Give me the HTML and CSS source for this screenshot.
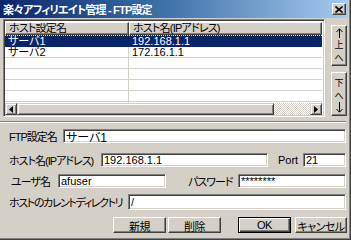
FILE: index.html
```html
<!DOCTYPE html>
<html lang="ja">
<head>
    <meta charset="UTF-8">
    <title>楽々アフィリエイト管理 - FTP設定</title>
    <link rel="stylesheet" href="styles.css">
</head>
<body>
    <div class="window">
        <div class="titlebar">
            <span class="title">楽々アフィリエイト管理 - FTP設定</span>
            <button class="close" type="button">
                <svg width="8" height="7" viewBox="0 0 8 7"><path d="M0.5 0.5 L7.5 6.5 M7.5 0.5 L0.5 6.5" stroke="#000" stroke-width="1.6"/></svg>
            </button>
        </div>

        <div class="top">
            <div class="list">
                <div class="list-head">
                    <div class="col col-name">ホスト設定名</div>
                    <div class="col col-host">ホスト名(IPアドレス)</div>
                </div>
                <div class="list-body">
                    <div class="row selected"><div class="cell cell-name">サーバ1</div><div class="cell">192.168.1.1</div></div>
                    <div class="row"><div class="cell cell-name">サーバ2</div><div class="cell">172.16.1.1</div></div>
                    <div class="row"><div class="cell cell-name"></div><div class="cell"></div></div>
                    <div class="row"><div class="cell cell-name"></div><div class="cell"></div></div>
                    <div class="row"><div class="cell cell-name"></div><div class="cell"></div></div>
                    <div class="row"><div class="cell cell-name"></div><div class="cell"></div></div>
                    <div class="row"><div class="cell cell-name"></div><div class="cell"></div></div>
                </div>
                <div class="hscroll">
                    <div class="sb-btn"><svg width="4" height="7" viewBox="0 0 4 7"><path d="M4 0 L0 3.5 L4 7 Z" fill="#000"/></svg></div>
                    <div class="sb-thumb"></div>
                    <div class="sb-track"></div>
                    <div class="sb-btn"><svg width="4" height="7" viewBox="0 0 4 7"><path d="M0 0 L4 3.5 L0 7 Z" fill="#000"/></svg></div>
                </div>
            </div>

            <div class="side">
                <button class="side-btn up" type="button">
                    <svg width="7" height="10" viewBox="0 0 7 10"><path d="M3.5 1 V10 M0.5 4 L3.5 0.8 L6.5 4" stroke="#000" fill="none"/></svg>
                    <span class="side-char">上</span>
                    <span class="side-char">へ</span>
                </button>
                <button class="side-btn down" type="button">
                    <span class="side-char">下</span>
                    <span class="side-char">へ</span>
                    <svg width="7" height="11" viewBox="0 0 7 11"><path d="M3.5 0 V10 M0.5 7 L3.5 10.2 L6.5 7" stroke="#000" fill="none"/></svg>
                </button>
            </div>
        </div>

        <div class="separator"></div>

        <div class="form">
            <div class="field-row row-1">
                <label class="lbl lbl-name">FTP設定名</label>
                <input class="box box-name" type="text" value="サーバ1">
            </div>
            <div class="field-row row-2">
                <label class="lbl lbl-host">ホスト名(IPアドレス)</label>
                <input class="box box-host" type="text" value="192.168.1.1">
                <label class="lbl lbl-port">Port</label>
                <input class="box box-port" type="text" value="21">
            </div>
            <div class="field-row row-3">
                <label class="lbl lbl-user">ユーザ名</label>
                <input class="box box-user" type="text" value="afuser">
                <label class="lbl lbl-pass">パスワード</label>
                <input class="box box-pass" type="text" value="********">
            </div>
            <div class="field-row row-4">
                <label class="lbl lbl-dir">ホストのカレントディレクトリ</label>
                <input class="box box-dir" type="text" value="/">
            </div>
            <div class="buttons">
                <button class="btn btn-new" type="button">新規</button>
                <button class="btn btn-del" type="button">削除</button>
                <button class="btn btn-ok" type="button">OK</button>
                <button class="btn btn-cancel" type="button">キャンセル</button>
            </div>
        </div>
    </div>
</body>
</html>
```

FILE: styles.css
```css
* {
    margin: 0;
    padding: 0;
    box-sizing: border-box;
}

body {
    width: 351px;
    height: 240px;
    overflow: hidden;
    background-color: #d4d0c8;
    font-family: "Liberation Sans", "Noto Sans CJK JP", sans-serif;
    font-size: 11px;
    font-feature-settings: "palt";
    color: #000;
}

.window {
    width: 351px;
    height: 240px;
    background-color: #d4d0c8;
    border-right: 1px solid #404040;
    border-bottom: 1px solid #404040;
    box-shadow: inset -1px -1px #808080;
}

/* title bar */
.titlebar {
    width: 348px;
    height: 18px;
    display: flex;
    align-items: center;
    justify-content: space-between;
    padding: 0 2px 0 3px;
    background: linear-gradient(to right, #0a246a, #3a6ea5 45%, #a6caf0);
}

.title {
    color: #fff;
    font-weight: bold;
    font-size: 11px;
    letter-spacing: -0.8px;
}

.close {
    width: 14px;
    height: 12px;
    display: flex;
    align-items: center;
    justify-content: center;
    background-color: #d4d0c8;
    border: 1px solid;
    border-color: #fff #404040 #404040 #fff;
    box-shadow: inset -1px -1px #808080;
}

/* list */
.top {
    display: flex;
    padding: 1px 0 0 3px;
}

.list {
    width: 322px;
    height: 98px;
    background-color: #fff;
    border: 1px solid;
    border-color: #808080 #fff #fff #808080;
    box-shadow: inset 1px 1px #404040, inset -1px -1px #d4d0c8;
    padding: 2px 2px 1px 1px;
    display: flex;
    flex-direction: column;
    overflow: hidden;
}

.list-head {
    display: flex;
    height: 13px;
    flex-shrink: 0;
}

.col {
    height: 13px;
    line-height: 11px;
    padding-left: 3px;
    background-color: #d4d0c8;
    border: 1px solid;
    border-color: #fff #404040 #404040 #fff;
    box-shadow: inset -1px -1px #808080;
    white-space: nowrap;
    overflow: hidden;
    letter-spacing: -0.8px;
}

.col-name {
    width: 124px;
}

.col-host {
    flex: 1;
}

.list-body {
    flex: 1;
    overflow: hidden;
}

.row {
    display: flex;
    height: 11px;
    border-bottom: 1px solid #d4d0c8;
}

.cell {
    line-height: 10px;
    padding-left: 3px;
    white-space: nowrap;
}

.cell-name {
    width: 124px;
    border-right: 1px solid #d4d0c8;
}

.row.selected {
    height: 12px;
    background-color: #0a246a;
    color: #fff;
    border-top: 1px dotted #e8e070;
    border-bottom: none;
}

.row.selected .cell-name {
    border-right-color: #0a246a;
}

.hscroll {
    display: flex;
    height: 12px;
    flex-shrink: 0;
}

.sb-btn {
    width: 12px;
    height: 12px;
    display: flex;
    align-items: center;
    justify-content: center;
    background-color: #d4d0c8;
    border: 1px solid;
    border-color: #d4d0c8 #404040 #404040 #d4d0c8;
    box-shadow: inset 1px 1px #fff, inset -1px -1px #808080;
}

.sb-thumb {
    width: 257px;
    background-color: #d4d0c8;
    border: 1px solid;
    border-color: #d4d0c8 #404040 #404040 #d4d0c8;
    box-shadow: inset 1px 1px #fff, inset -1px -1px #808080;
}

.sb-track {
    flex: 1;
    background-color: #fff;
    background-image: repeating-conic-gradient(#d4d0c8 0 25%, #fff 0 50%);
    background-size: 2px 2px;
}

/* up / down buttons */
.side {
    display: flex;
    flex-direction: column;
    gap: 6px;
    margin: 6px 0 0 6px;
}

.side-btn {
    width: 16px;
    display: flex;
    flex-direction: column;
    align-items: center;
    justify-content: center;
    background-color: #d4d0c8;
    font-family: "Noto Sans CJK JP", sans-serif;
    font-size: 9px;
    border: 1px solid;
    border-color: #fff #404040 #404040 #fff;
    box-shadow: inset -1px -1px #808080;
}

.side-char {
    display: block;
    line-height: 13px;
}

.side-btn.up {
    height: 41px;
}

.side-btn.down {
    height: 44px;
}

.separator {
    margin: 4px 4px 0 0;
    height: 2px;
    border-top: 1px solid #808080;
    border-bottom: 1px solid #fff;
}

/* form */
.form {
    padding-top: 6px;
}

.field-row {
    display: flex;
    align-items: center;
    height: 14px;
}

.row-2 {
    margin-top: 10px;
}

.row-3 {
    margin-top: 7px;
}

.row-4 {
    margin-top: 6px;
    height: 16px;
}

.lbl {
    padding-left: 9px;
    white-space: nowrap;
    letter-spacing: -1px;
}

.lbl-name { width: 63px; }
.lbl-host { width: 101px; }
.lbl-user { width: 58px; padding-left: 11px; }
.lbl-dir { width: 128px; letter-spacing: -1.4px; }

.lbl-port {
    width: 35px;
    padding-left: 10px;
    letter-spacing: 0;
}

.lbl-pass {
    width: 72px;
    padding-left: 22px;
}

.box {
    height: 100%;
    padding: 0 2px;
    font-family: "Liberation Sans", "Noto Sans CJK JP", sans-serif;
    font-size: 11px;
    font-feature-settings: "palt";
    color: #000;
    background-color: #fff;
    border: 1px solid;
    border-color: #808080 #fff #fff #808080;
    box-shadow: inset 1px 1px #404040, inset -1px -1px #d4d0c8;
    outline: none;
}

.box-name { width: 283px; font-size: 12px; }
.box-host { width: 167px; }
.box-port { width: 43px; }
.box-user { width: 108px; }
.box-pass { width: 108px; }
.box-dir { width: 218px; }

.buttons {
    display: flex;
    margin: 7px 0 0 113px;
    height: 16px;
}

.btn {
    width: 53px;
    height: 16px;
    font-family: "Liberation Sans", "Noto Sans CJK JP", sans-serif;
    font-size: 11px;
    font-feature-settings: "palt";
    letter-spacing: -0.5px;
    background-color: #d4d0c8;
    border: 1px solid;
    border-color: #fff #404040 #404040 #fff;
    box-shadow: inset -1px -1px #808080;
}

.btn-del {
    margin-left: 2px;
}

.btn-ok {
    margin-left: 17px;
    border-color: #000;
    box-shadow: inset 1px 1px #fff, inset -1px -1px #404040, inset -2px -2px #808080;
}

.btn-cancel {
    margin-left: 4px;
    width: 52px;
}
```
